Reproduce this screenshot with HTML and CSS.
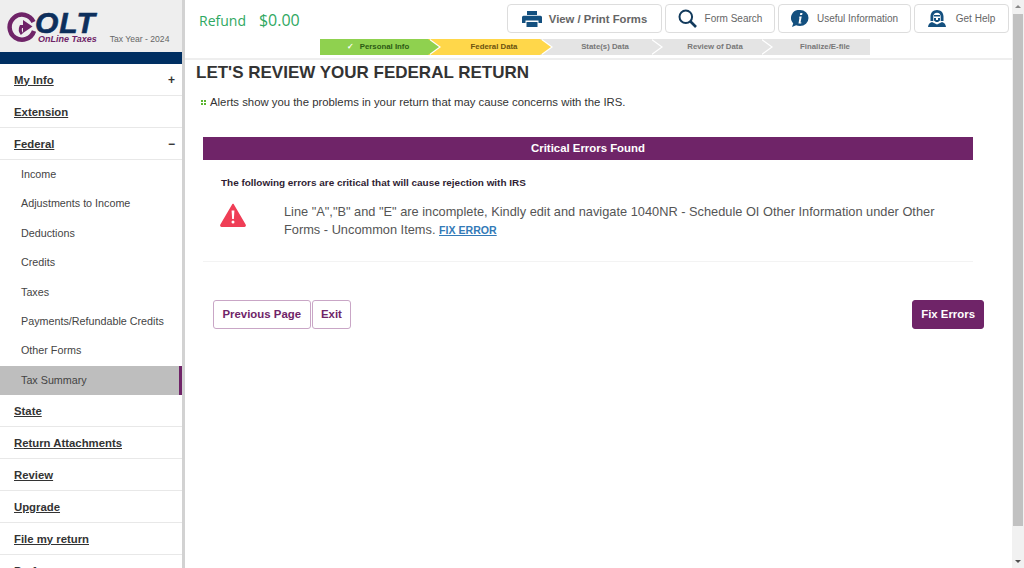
FILE: index.html
```html
<!DOCTYPE html>
<html lang="en">
<head>
  <meta charset="UTF-8" />
  <meta name="viewport" content="width=device-width, initial-scale=1.0"/>
  <title>OLT OnLine Taxes - Federal Review</title>
  <link rel="stylesheet" href="styles.css">
</head>
<body>

<div class="page">
  <aside class="sidebar">
    <div class="brand">
      <svg class="brand-mark" width="30" height="32" viewBox="0 0 30 32">
        <path d="M26.500 11A12.500 12.500 0 1 0 27 20" fill="none" stroke="#6f2468" stroke-width="4.500"/>
        <path d="M15 23A7 7 0 0 1 14 15.500h3" fill="none" stroke="#6f2468" stroke-width="3"/>
        <path d="M16 9L25.500 15.500L16 22z" fill="#6f2468"/>
      </svg>
      <div class="brand-name">
        <div class="brand-olt">OLT</div>
        <div class="brand-sub">OnLine Taxes</div>
      </div>
      <div class="brand-year">Tax Year - 2024</div>
    </div>
    <div class="navy"></div>
    <ul class="menu">
      <li class="menu-item"><a href="#">My Info</a><span class="sign">+</span></li>
      <li class="menu-item"><a href="#">Extension</a></li>
      <li class="menu-item"><a href="#">Federal</a><span class="sign">&minus;</span></li>
      <li class="sub-item">Income</li>
      <li class="sub-item">Adjustments to Income</li>
      <li class="sub-item">Deductions</li>
      <li class="sub-item">Credits</li>
      <li class="sub-item">Taxes</li>
      <li class="sub-item">Payments/Refundable Credits</li>
      <li class="sub-item">Other Forms</li>
      <li class="sub-item active">Tax Summary</li>
      <li class="menu-item"><a href="#">State</a></li>
      <li class="menu-item"><a href="#">Return Attachments</a></li>
      <li class="menu-item"><a href="#">Review</a></li>
      <li class="menu-item"><a href="#">Upgrade</a></li>
      <li class="menu-item"><a href="#">File my return</a></li>
      <li class="menu-item"><a href="#">Preferences</a></li>
    </ul>
  </aside>

  <div class="main">
    <header class="topbar">
      <div class="top-row">
        <div class="refund"><span class="refund-label">Refund</span><span class="refund-value">$0.00</span></div>
        <div class="tools">
          <a class="tool tool-print" href="#">
            <svg width="20" height="16" viewBox="0 0 20 16"><path d="M5 0h10v4H5z" fill="#14507f"/><path d="M1.500 4.800h17a1.500 1.500 0 0 1 1.500 1.500V12h-3.500V9.500h-13V12H0V6.300a1.500 1.500 0 0 1 1.500-1.500z" fill="#14507f"/><path d="M4.500 11h11v5h-11z" fill="#14507f"/></svg>
            View / Print Forms
          </a>
          <a class="tool tool-search" href="#">
            <svg width="19" height="19" viewBox="0 0 19 19"><circle cx="7.800" cy="7.800" r="6.300" fill="none" stroke="#123a5c" stroke-width="2"/><path d="M12.500 12.500L18 18" stroke="#123a5c" stroke-width="2.600"/></svg>
            Form Search
          </a>
          <a class="tool tool-info" href="#">
            <svg width="18" height="17" viewBox="0 0 18 17"><path d="M9 0a8.500 8 0 0 1 0 16c-1.500 0-2.800-.3-3.900-.8L1 17l1.200-3.600A8 8 0 0 1 9 0z" fill="#14507f"/><path d="M9.300 3h2.200l-.4 2H8.900zM8.500 6.500h2.200L9.500 12.500h1l-.3 1H7.500l1-6H7.800z" fill="#fff"/></svg>
            Useful Information
          </a>
          <a class="tool tool-help" href="#">
            <svg width="18" height="17" viewBox="0 0 18 17"><path d="M9 0c3.900 0 6.500 2.800 6.500 6.500V11h-2.800V6.500C12.700 4.200 11.200 2.800 9 2.800S5.300 4.200 5.300 6.500V11H2.500V6.500C2.500 2.800 5.100 0 9 0z" fill="#14507f"/><path d="M6 5h6v1.500H6zM10 8h2v2.500l-2 1.500H8l-2-1.500V8h2v2h2z" fill="#14507f"/><path d="M0 17c.3-2.800 1.500-4.200 4-5l5 2.500 5-2.500c2.500.8 3.700 2.200 4 5z" fill="#14507f"/></svg>
            Get Help
          </a>
        </div>
      </div>
      <ol class="steps">
        <li class="step done"><span class="tick">&#10003;</span>Personal Info</li>
        <li class="step current">Federal Data</li>
        <li class="step">State(s) Data</li>
        <li class="step">Review of Data</li>
        <li class="step last">Finalize/E-file</li>
      </ol>
    </header>

    <main class="content">
      <h1 class="title">LET'S REVIEW YOUR FEDERAL RETURN</h1>
      <p class="note"><span class="bullet"><i></i><i></i><i></i><i></i></span>Alerts show you the problems in your return that may cause concerns with the IRS.</p>

      <section class="panel">
        <div class="panel-head">Critical Errors Found</div>
        <p class="panel-lead">The following errors are critical that will cause rejection with IRS</p>
        <div class="error-row">
          <svg class="warn" width="26" height="24" viewBox="0 0 26 24"><path d="M13 1.500L25 22a.8.8 0 0 1-.7 1.200H1.700A.8.8 0 0 1 1 22z" fill="#ef3e56" stroke="#ef3e56" stroke-width="1.500" stroke-linejoin="round"/><path d="M11.600 7.500h2.800l-.5 8.500h-1.800z" fill="#fff"/><circle cx="13" cy="19" r="1.500" fill="#fff"/></svg>
          <p class="error-text">Line "A","B" and "E" are incomplete, Kindly edit and navigate 1040NR - Schedule OI Other Information under Other Forms - Uncommon Items. <a class="fix-link" href="#">FIX ERROR</a></p>
        </div>
      </section>

      <div class="actions">
        <a class="btn" href="#">Previous Page</a>
        <a class="btn" href="#">Exit</a>
        <a class="btn primary" href="#">Fix Errors</a>
      </div>
    </main>
  </div>

  <div class="scrollbar">
    <span class="arrow up"></span>
    <div class="thumb"></div>
    <span class="arrow down"></span>
  </div>
</div>

</body>
</html>
```

FILE: styles.css
```css
* {
  box-sizing: border-box;
}
html, body {
  margin: 0;
  height: 568px;
  overflow: hidden;
}
body {
  font-family: "Liberation Sans", Arial, sans-serif;
  background: #fff;
  color: #333;
}
a {
  color: inherit;
}
.page {
  display: flex;
  height: 568px;
}

/* sidebar */
.sidebar {
  width: 185px;
  flex: none;
  height: 568px;
  overflow: hidden;
  border-right: 3px solid #d2d2d2;
}
.brand {
  height: 52px;
  background: #eee;
  display: flex;
  align-items: flex-start;
  padding: 11px 0 0 7px;
}
.brand-mark {
  flex: none;
}
.brand-olt {
  font-size: 30px;
  line-height: 23px;
  margin-left: -2px;
  font-weight: bold;
  font-style: italic;
  color: #0d2f5c;
  letter-spacing: 1px;
  -webkit-text-stroke: 0.6px #0d2f5c;
}
.brand-sub {
  font-size: 9px;
  line-height: 10px;
  margin-left: 1px;
  font-weight: bold;
  font-style: italic;
  color: #6f2468;
}
.brand-year {
  font-size: 8.600px;
  color: #666;
  margin-left: 13px;
  margin-top: 23px;
  white-space: nowrap;
}
.navy {
  height: 12px;
  background: #002f62;
}
.menu {
  list-style: none;
  margin: 0;
  padding: 0;
}
.menu-item {
  height: 32px;
  display: flex;
  justify-content: space-between;
  align-items: center;
  padding: 0 7px 0 14px;
  border-bottom: 1px solid #e8e8e8;
  font-size: 11.350px;
  font-weight: bold;
}
.sign {
  font-size: 12px;
}
.sub-item {
  height: 29.375px;
  line-height: 29.375px;
  padding-left: 21px;
  font-size: 10.750px;
  color: #444;
}
.sub-item.active {
  background: #bebebe;
  border-right: 3px solid #6f2468;
}

/* header */
.main {
  flex: 1;
  min-width: 0;
}
.topbar {
  height: 60px;
  border-bottom: 2px solid #eee;
  padding: 4px 3px 0 14px;
}
.top-row {
  display: flex;
  justify-content: space-between;
  height: 29px;
}
.refund {
  color: #2fa862;
  padding-top: 5px;
  white-space: nowrap;
}
.refund-label {
  font-family: "Open Sans", sans-serif;
  font-size: 14px;
  margin-right: 13px;
}
.refund-value {
  font-family: "Open Sans", sans-serif;
  font-size: 16px;
}
.tools {
  display: flex;
  gap: 3px;
}
.tool {
  height: 29px;
  display: flex;
  align-items: center;
  justify-content: center;
  gap: 8px;
  border: 1px solid #ddd;
  border-radius: 4px;
  text-decoration: none;
  font-size: 10px;
  color: #666;
  white-space: nowrap;
}
.tool-print {
  width: 155px;
  gap: 7px;
  font-size: 11.300px;
  font-weight: bold;
}
.tool-search {
  width: 110px;
}
.tool-info {
  width: 133px;
}
.tool-help {
  width: 95px;
  gap: 10px;
}
.steps {
  list-style: none;
  margin: 6px 0 0 121px;
  padding: 0;
  display: flex;
  width: 551px;
  height: 16px;
}
.step {
  position: relative;
  flex: 0 0 110px;
  background: #e4e4e4;
  color: #777;
  font-size: 7.800px;
  font-weight: bold;
  line-height: 16px;
  text-align: center;
  padding-left: 20px;
}
.step::after {
  content: "";
  position: absolute;
  z-index: 1;
  right: -11px;
  top: 0;
  border-left: 11px solid #e4e4e4;
  border-top: 8px solid transparent;
  border-bottom: 8px solid transparent;
  filter: drop-shadow(2px 0 0 #fff);
}
.step.last::after {
  display: none;
}
.step.done {
  flex-basis: 108px;
  padding-left: 8px;
  background: #8fd14f;
  color: #2c5a14;
  z-index: 2;
}
.step.done::after {
  border-left-color: #8fd14f;
}
.step.current {
  flex-basis: 112px;
  background: #ffd74a;
  color: #6b5310;
  z-index: 1;
}
.step.current::after {
  border-left-color: #ffd74a;
}
.tick {
  color: #fff;
  margin-right: 6px;
}

/* content */
.content {
  padding: 0 28px 0 11px;
}
.title {
  margin: 2px 0 0;
  font-size: 17px;
  line-height: 21px;
  font-weight: bold;
  color: #333;
}
.note {
  margin: 11px 0 0 4px;
  font-size: 11.350px;
  line-height: 16px;
  display: flex;
  align-items: center;
  color: #333;
}
.bullet {
  display: grid;
  grid-template-columns: 2px 2px;
  gap: 1px;
  margin: 0 4px 0 1px;
}
.bullet i {
  width: 2px;
  height: 2px;
  background: #5cb531;
}
.panel {
  margin: 27px 11px 0 7px;
  border-bottom: 1px solid #f3f3f3;
  padding-bottom: 22px;
}
.panel-head {
  height: 23px;
  line-height: 23px;
  background: #6f2468;
  color: #fff;
  font-size: 11.400px;
  font-weight: bold;
  text-align: center;
}
.panel-lead {
  margin: 17px 0 0 18px;
  font-size: 9.950px;
  line-height: 12px;
  font-weight: bold;
  color: #2f1d33;
}
.error-row {
  display: flex;
  margin-top: 14px;
  padding-left: 17px;
}
.warn {
  flex: none;
  margin: 0 38px 0 0;
}
.error-text {
  margin: 0;
  font-size: 12.800px;
  line-height: 18px;
  color: #555;
  padding-right: 30px;
}
.fix-link {
  font-size: 10.600px;
  font-weight: bold;
  color: #337ab7;
}
.actions {
  display: flex;
  gap: 1px;
  margin: 38px 0 0 17px;
}
.btn {
  height: 29px;
  line-height: 27px;
  padding: 0 8.500px;
  border: 1px solid #c9a6c6;
  border-radius: 3px;
  text-decoration: none;
  font-size: 11.400px;
  font-weight: bold;
  color: #6f2468;
}
.btn.primary {
  margin-left: auto;
  padding: 0 8px;
  background: #6f2468;
  border-color: #6f2468;
  color: #fff;
}

/* scrollbar */
.scrollbar {
  width: 12px;
  flex: none;
  background: #f1f1f1;
  display: flex;
  flex-direction: column;
  align-items: center;
}
.thumb {
  width: 10px;
  height: 512px;
  background: #c1c1c1;
  margin: 6px 0;
}
.arrow {
  width: 0;
  height: 0;
  border-left: 3px solid transparent;
  border-right: 3px solid transparent;
}
.arrow.up {
  margin-top: 5px;
  border-bottom: 3px solid #888;
}
.arrow.down {
  margin-top: 28px;
  border-top: 3px solid #505050;
}
```
